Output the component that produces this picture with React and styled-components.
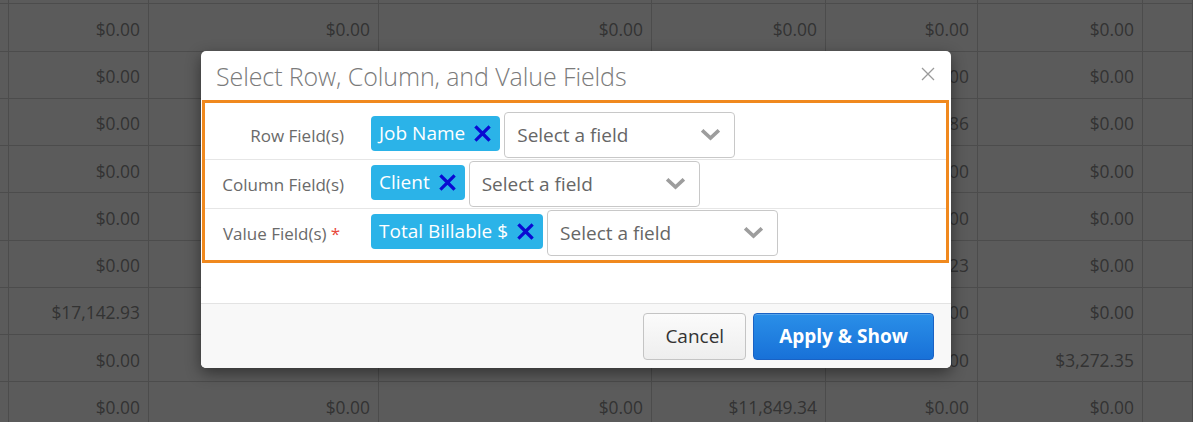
import styled, { createGlobalStyle } from "styled-components";

const GlobalStyle = createGlobalStyle`
  body {
    margin: 0;
    font-family: "Open Sans", "Liberation Sans", sans-serif;
    overflow: hidden;
  }
`;

const rows = [
  ["$0.00", "$0.00", "$0.00", "$0.00", "$0.00", "$0.00"],
  ["$0.00", "$0.00", "$0.00", "$0.00", "$0.00", "$0.00"],
  ["$0.00", "$0.00", "$0.00", "$0.00", "$0.00", "$0.00"],
  ["$0.00", "$0.00", "$0.00", "$0.00", "$1,204.86", "$0.00"],
  ["$0.00", "$0.00", "$0.00", "$0.00", "$0.00", "$0.00"],
  ["$0.00", "$0.00", "$0.00", "$0.00", "$0.00", "$0.00"],
  ["$0.00", "$0.00", "$0.00", "$0.00", "$512.23", "$0.00"],
  ["$17,142.93", "$0.00", "$0.00", "$0.00", "$0.00", "$0.00"],
  ["$0.00", "$0.00", "$0.00", "$0.00", "$0.00", "$3,272.35"],
  ["$0.00", "$0.00", "$0.00", "$11,849.34", "$0.00", "$0.00"],
];

const fields = [
  { label: "Row Field(s)", chip: "Job Name" },
  { label: "Column Field(s)", chip: "Client" },
  { label: "Value Field(s)", chip: "Total Billable $", required: true },
];

function RemoveIcon() {
  return (
    <svg width="17" height="17" viewBox="0 0 17 17">
      <path d="M2.5 2.5 L14.5 14.5 M14.5 2.5 L2.5 14.5" stroke="#0a0ad2" strokeWidth="3.2" strokeLinecap="square" fill="none" />
    </svg>
  );
}

function ChevronIcon() {
  return (
    <svg width="19" height="12" viewBox="0 0 19 12">
      <path d="M2.5 2.5 L9.5 9 L16.5 2.5" stroke="#9d9d9d" strokeWidth="3.6" strokeLinecap="square" fill="none" />
    </svg>
  );
}

function CloseIcon() {
  return (
    <svg width="14" height="14" viewBox="0 0 14 14">
      <path d="M1 1 L13 13 M13 1 L1 13" stroke="#9a9a9a" strokeWidth="1.3" fill="none" />
    </svg>
  );
}

export default function App() {
  return (
    <Page>
      <GlobalStyle />
      <Sheet>
        {rows.map((r, i) => (
          <SheetRow key={i}>
            <Cell />
            {r.map((v, j) => (
              <Cell key={j}>{v}</Cell>
            ))}
            <Cell />
          </SheetRow>
        ))}
      </Sheet>
      <Backdrop>
        <Modal>
          <Header>
            <Title>Select Row, Column, and Value Fields</Title>
            <CloseButton><CloseIcon /></CloseButton>
          </Header>
          <FieldBox>
            {fields.map((f) => (
              <FieldRow key={f.label}>
                <Label>
                  {f.label}
                  {f.required && <Star>*</Star>}
                </Label>
                <Chip>
                  {f.chip}
                  <RemoveIcon />
                </Chip>
                <Select>
                  <span>Select a field</span>
                  <ChevronIcon />
                </Select>
              </FieldRow>
            ))}
          </FieldBox>
          <Spacer />
          <Footer>
            <Button>Cancel</Button>
            <Button $primary>Apply &amp; Show</Button>
          </Footer>
        </Modal>
      </Backdrop>
    </Page>
  );
}

const Page = styled.div`
  position: relative;
  width: 1193px;
  height: 422px;
  overflow: hidden;
  background: #fff;
`;

const Sheet = styled.div`
  margin-top: -43px;
`;

const SheetRow = styled.div`
  display: grid;
  grid-template-columns: 8px 141px 230px 273px 174px 152px 165px 1fr;
  height: 47.25px;
  box-sizing: border-box;
  border-bottom: 1px solid #d4d4d4;
`;

const Cell = styled.div`
  border-right: 1px solid #d4d4d4;
  padding: 3px 8px 0 0;
  display: flex;
  align-items: center;
  justify-content: flex-end;
  font-size: 17.4px;
  color: #8f8f8f;
`;

const Backdrop = styled.div`
  position: absolute;
  inset: 0;
  background: rgba(0, 0, 0, 0.645);
  padding: 51px 0 0 201px;
`;

const Modal = styled.div`
  width: 750px;
  background: #fff;
  border-radius: 5px;
  overflow: hidden;
  box-shadow: 0 5px 15px rgba(0, 0, 0, 0.45);
  display: flex;
  flex-direction: column;
`;

const Header = styled.div`
  height: 49px;
  display: flex;
  align-items: center;
  justify-content: space-between;
  padding: 0 16px 0 15px;
`;

const Title = styled.h4`
  margin: 0;
  font-size: 25px;
  font-weight: 300;
  color: #7b7b7b;
  letter-spacing: -0.1px;
`;

const CloseButton = styled.div`
  display: flex;
  margin-top: -4px;
`;

const FieldBox = styled.div`
  margin: 0 2px 0 1px;
  border: 3px solid #f0891e;
  padding: 8px 0 3px;
`;

const FieldRow = styled.div`
  display: flex;
  align-items: center;
  gap: 4px;
  padding: 1px 0;
  & + & {
    border-top: 1px solid #e6e6e6;
  }
`;

const Label = styled.div`
  width: 139px;
  margin-right: 23px;
  text-align: right;
  font-size: 17px;
  color: #6a6a6a;
`;

const Star = styled.span`
  color: #e8483b;
  margin-left: 4px;
  margin-right: 4px;
`;

const Chip = styled.div`
  height: 35px;
  box-sizing: border-box;
  display: flex;
  align-items: center;
  gap: 9px;
  padding: 0 9px 0 8px;
  margin-bottom: 4px;
  border-radius: 4px;
  background: #2bb3e8;
  color: #fff;
  font-size: 19px;
`;

const Select = styled.div`
  width: 231px;
  height: 46px;
  box-sizing: border-box;
  display: flex;
  align-items: center;
  justify-content: space-between;
  padding: 0 14px 0 12px;
  border: 1px solid #c8c8c8;
  border-radius: 4px;
  font-size: 19px;
  color: #666;
`;

const Spacer = styled.div`
  height: 40px;
`;

const Footer = styled.div`
  height: 65px;
  box-sizing: border-box;
  border-top: 1px solid #e3e3e3;
  background: #f8f8f8;
  display: flex;
  align-items: center;
  justify-content: flex-end;
  gap: 7px;
  padding: 0 17px 0 0;
`;

const Button = styled.button`
  height: 47px;
  padding: 0 ${(p) => (p.$primary ? "25px" : "21px")};
  border-radius: 4px;
  font-family: "Open Sans", "Liberation Sans", sans-serif;
  font-size: 19px;
  font-weight: ${(p) => (p.$primary ? 700 : 400)};
  color: ${(p) => (p.$primary ? "#fff" : "#333")};
  border: 1px solid ${(p) => (p.$primary ? "#1a62c4" : "#c4c4c4")};
  background: ${(p) =>
    p.$primary
      ? "linear-gradient(#2a8fe8, #1871d8)"
      : "linear-gradient(#fbfbfb, #eeeeee)"};
  box-shadow: inset 0 1px 0 rgba(255, 255, 255, 0.2);
`;
